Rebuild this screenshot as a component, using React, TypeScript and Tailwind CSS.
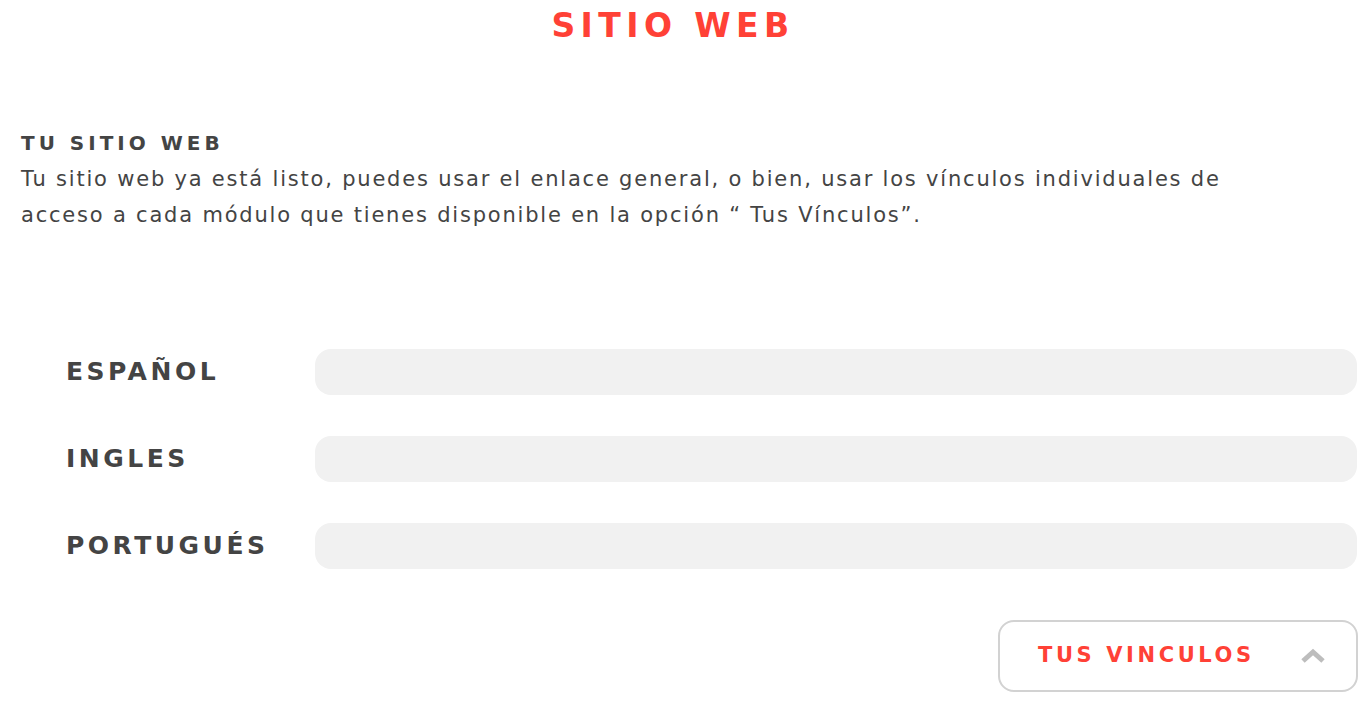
import React from 'react';

const labels = ['ESPAÑOL', 'INGLES', 'PORTUGUÉS'];

export default function App() {
  return (
    <div className="w-[1370px] h-[702px] bg-white overflow-hidden font-['DejaVu_Sans',sans-serif] text-[#444444]">
      {/* Title */}
      <h1 className="pt-[6px] pr-[24px] text-center text-[33px] leading-[40px] font-bold tracking-[5.4px] text-[#ff4136]">
        SITIO WEB
      </h1>

      {/* Intro */}
      <div className="pl-[21px] pr-[13px] mt-[85px]">
        <h2 className="text-[20px] leading-[24px] font-bold tracking-[4px]">TU SITIO WEB</h2>
        <p className="mt-[6px] text-[21px] leading-[36px] tracking-[1.8px] w-[1250px]">
          Tu sitio web ya está listo, puedes usar el enlace general, o bien, usar los vínculos individuales de acceso a
          cada módulo que tienes disponible en la opción “ Tus Vínculos”.
        </p>
      </div>

      {/* Links */}
      <div className="mt-[116px] pl-[66px] pr-[13px] flex flex-col gap-[41px]">
        {labels.map((l) => (
          <div key={l} className="flex items-center">
            <span className="w-[249px] text-[25px] tracking-[0.14em] font-semibold">{l}</span>
            <div className="flex-1 h-[46px] rounded-[16px] bg-[#f1f1f1]" />
          </div>
        ))}
      </div>

      {/* Button */}
      <div className="flex justify-end pr-[12px] mt-[51px]">
        <button className="w-[360px] h-[72px] rounded-[16px] border-2 border-[#d2d2d2] flex items-center justify-between pl-[38px] pr-[30px]">
          <span className="text-[21px] font-bold tracking-[3.6px] text-[#ff4136]">TUS VINCULOS</span>
          <svg width="26" height="16" viewBox="0 0 26 16">
            <path d="M3 13 L13 4 L23 13" fill="none" stroke="#bdbdbd" strokeWidth="5" />
          </svg>
        </button>
      </div>
    </div>
  );
}
